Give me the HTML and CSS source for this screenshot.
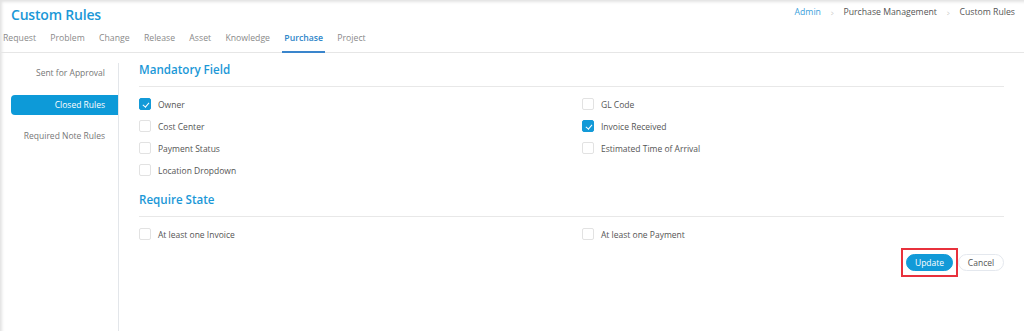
FILE: index.html
```html
<!DOCTYPE html>
<html lang="en">
<head>
    <meta charset="utf-8" />
    <title>Custom Rules</title>
    <link rel="stylesheet" href="styles.css">
</head>
<body>
<div id="page">

    <div id="header">
        <h1>Custom Rules</h1>
        <div class="crumbs">
            <a href="#">Admin</a>
            <span class="sep">&gt;</span>
            <span>Purchase Management</span>
            <span class="sep">&gt;</span>
            <span>Custom Rules</span>
        </div>
    </div>

    <ul class="tabs">
        <li>Request</li>
        <li>Problem</li>
        <li>Change</li>
        <li>Release</li>
        <li>Asset</li>
        <li>Knowledge</li>
        <li class="active">Purchase</li>
        <li>Project</li>
    </ul>

    <div id="main">
        <ul class="side">
            <li>Sent for Approval</li>
            <li class="active">Closed Rules</li>
            <li>Required Note Rules</li>
        </ul>

        <div class="content">
            <h2>Mandatory Field</h2>
            <div class="fields">
                <label class="check"><span class="box on"></span>Owner</label>
                <label class="check"><span class="box"></span>GL Code</label>
                <label class="check"><span class="box"></span>Cost Center</label>
                <label class="check"><span class="box on"></span>Invoice Received</label>
                <label class="check"><span class="box"></span>Payment Status</label>
                <label class="check"><span class="box"></span>Estimated Time of Arrival</label>
                <label class="check"><span class="box"></span>Location Dropdown</label>
            </div>

            <h2>Require State</h2>
            <div class="fields">
                <label class="check"><span class="box"></span>At least one Invoice</label>
                <label class="check"><span class="box"></span>At least one Payment</label>
            </div>

            <div class="actions">
                <span class="highlight"><button class="btn primary">Update</button></span>
                <button class="btn">Cancel</button>
            </div>
        </div>
    </div>

</div>
</body>
</html>
```

FILE: styles.css
```css
html, body {
    margin: 0;
    padding: 0;
    background: #fff;
}

body {
    font-family: 'Open Sans', 'Liberation Sans', sans-serif;
    color: #555;
    font-size: 8.5px;
}

#page {
    height: 331px;
    box-shadow: inset 4px 4px 3px -2px #e3e3e3;
}

#header {
    display: flex;
    justify-content: space-between;
    align-items: center;
    padding: 4px 9px 0 11px;
    height: 20px;
}

h1 {
    margin: 0;
    font-size: 14px;
    font-weight: 600;
    color: #1b98d7;
    letter-spacing: -0.2px;
}

.crumbs {
    display: flex;
    align-items: center;
    gap: 9px;
    font-size: 8.7px;
    color: #555;
    margin-top: -4px;
}

    .crumbs a {
        color: #3a9fdc;
        text-decoration: none;
    }

    .crumbs .sep {
        color: #bbb;
        font-size: 8px;
        transform: scaleX(0.6);
    }

.tabs {
    list-style: none;
    margin: 0;
    padding: 0 0 0 3px;
    display: flex;
    gap: 14.3px;
    border-bottom: 1px solid #e6e6e6;
    height: 28px;
}

    .tabs li {
        font-size: 8.7px;
        color: #8a8a8a;
        line-height: 22px;
        padding-top: 3px;
    }

    .tabs li.active {
        color: #2e86c9;
        font-weight: 600;
        border-bottom: 2px solid #3a85cc;
        margin: 0 -2px;
        padding: 3px 2px 0;
        height: 24px;
    }

#main {
    display: flex;
    height: 282px;
}

.side {
    list-style: none;
    margin: 10px 0 0 0;
    padding: 0;
    width: 118px;
    border-right: 1px solid #e3e6ea;
}

    .side li {
        text-align: right;
        padding-right: 13px;
        line-height: 20px;
        margin: 0 0 11.5px 11px;
        color: #777;
        font-size: 8.5px;
    }

    .side li.active {
        background: #0d9ad8;
        color: #fff;
        border-radius: 4px 0 0 4px;
    }

.content {
    flex: 1;
    padding: 0 20px 0 20px;
}

h2 {
    margin: 0;
    font-size: 11.6px;
    font-weight: 600;
    color: #1b98d7;
    line-height: 18px;
    padding: 8px 0 7px;
    border-bottom: 1px solid #e8e8e8;
}

.fields {
    display: grid;
    grid-template-columns: 443px 1fr;
    row-gap: 10px;
    padding: 11px 0 7px;
}

.check {
    display: flex;
    align-items: center;
    gap: 7px;
    height: 12px;
    font-size: 8.5px;
    color: #555;
}

.box {
    width: 10px;
    height: 10px;
    border: 1px solid #e2e2e2;
    border-radius: 2px;
    position: relative;
}

    .box.on {
        background: #139ad8;
        border-color: #139ad8;
    }

        .box.on::after {
            content: "";
            position: absolute;
            left: 3.5px;
            top: 1.5px;
            width: 2.5px;
            height: 5px;
            border: solid #fff;
            border-width: 0 1.2px 1.2px 0;
            transform: rotate(40deg);
        }

.actions {
    display: flex;
    justify-content: flex-end;
    align-items: center;
    margin-top: 1px;
}

.highlight {
    border: 2px solid #e8313c;
    padding: 4px 3px;
    display: flex;
}

.btn {
    font-family: inherit;
    font-size: 8.5px;
    border-radius: 9px;
    height: 17px;
    width: 46px;
    padding: 0;
    border: 1px solid #e4e8ee;
    background: #fff;
    color: #555;
}

    .btn.primary {
        background: #119ad8;
        border-color: #119ad8;
        color: #fff;
        width: 47px;
    }
```
